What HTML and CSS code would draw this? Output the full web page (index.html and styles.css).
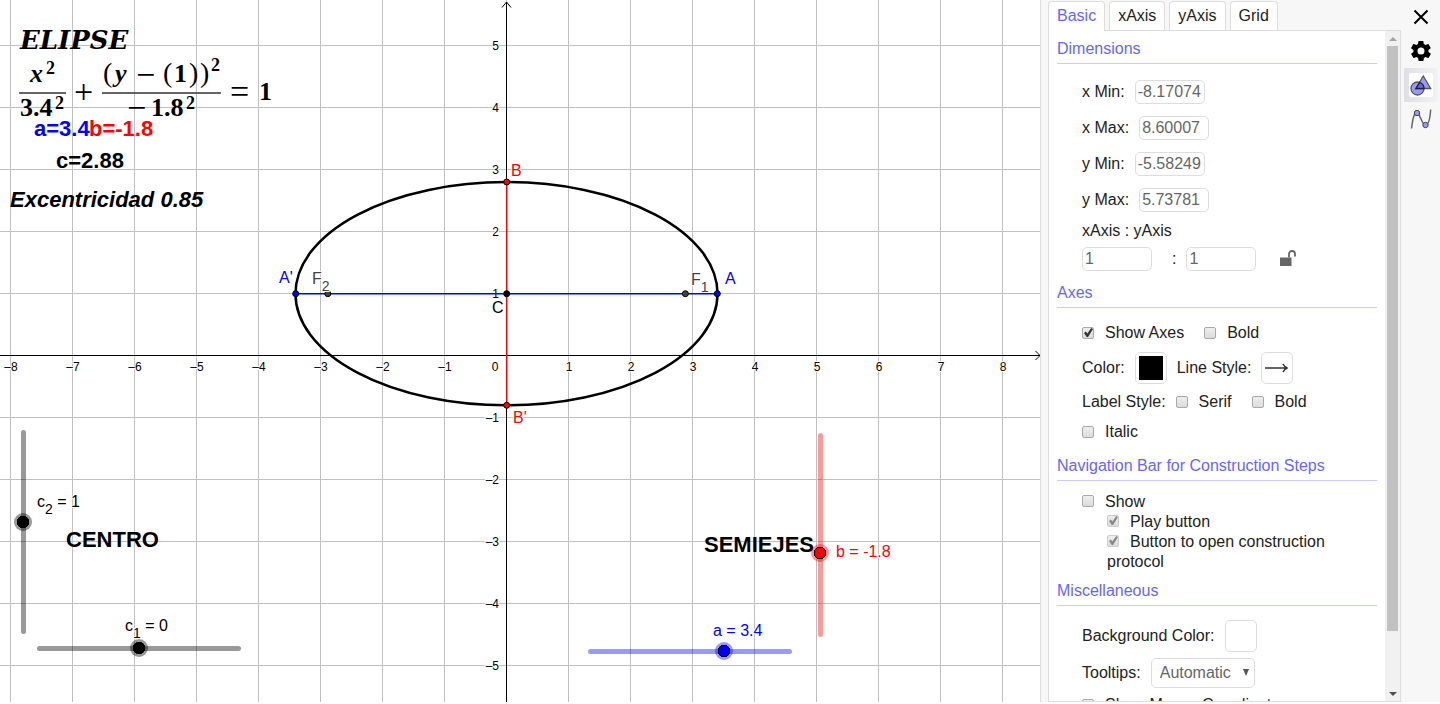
FILE: index.html
```html
<!DOCTYPE html>
<html lang="en">
<head>
<meta charset="utf-8">
<title>Elipse</title>
<link rel="stylesheet" href="styles.css">
</head>
<body>
<div class="app">
  <main class="canvas">
    <svg class="plot" role="img" aria-label="Elipse">
      <defs>
        <pattern id="grid" x="10" y="45" width="62" height="62" patternUnits="userSpaceOnUse">
          <path class="grid-line" d="M0.5 0V62M0 0.5H62"/>
        </pattern>
      </defs>
      <rect width="100%" height="100%" fill="url(#grid)"/>
      <g class="axis">
        <path d="M506.5 2V704M502 7.500L506.500 2L511 7.500"/>
        <path d="M0 355.500H1040M1035.500 351L1040 355.500L1035.500 360"/>
      </g>
      <g class="ticks ticks-x">
        <text x="11" y="371">–8</text><text x="73" y="371">–7</text><text x="135" y="371">–6</text><text x="197" y="371">–5</text><text x="259" y="371">–4</text><text x="321" y="371">–3</text><text x="383" y="371">–2</text><text x="445" y="371">–1</text><text x="495" y="371">0</text><text x="569" y="371">1</text><text x="631" y="371">2</text><text x="693" y="371">3</text><text x="755" y="371">4</text><text x="817" y="371">5</text><text x="879" y="371">6</text><text x="941" y="371">7</text><text x="1003" y="371">8</text>
      </g>
      <g class="ticks ticks-y">
        <text x="499" y="50">5</text><text x="499" y="112">4</text><text x="499" y="174">3</text><text x="499" y="236">2</text><text x="499" y="298">1</text><text x="499" y="422">–1</text><text x="499" y="484">–2</text><text x="499" y="546">–3</text><text x="499" y="608">–4</text><text x="499" y="670">–5</text>
      </g>
      <ellipse class="curve" cx="506.500" cy="293.700" rx="211" ry="111.600"/>
      <path class="axis-major" d="M296 293.700H717"/>
      <path class="axis-minor" d="M506.700 182V405"/>
      <g class="points">
        <circle class="focus" cx="327.800" cy="293.700" r="3"/>
        <circle class="focus" cx="685.400" cy="293.700" r="3"/>
        <circle class="blue" cx="295.700" cy="293.700" r="3"/>
        <circle class="blue" cx="717.300" cy="293.700" r="3"/>
        <circle class="red" cx="506.700" cy="182" r="3"/>
        <circle class="red" cx="506.700" cy="405.300" r="3"/>
        <circle cx="506.700" cy="293.700" r="3"/>
      </g>
      <g class="labels">
        <text class="blue" x="279" y="283">A'</text>
        <text class="blue" x="725" y="284">A</text>
        <text class="red" x="511" y="176">B</text>
        <text class="red" x="513" y="423">B'</text>
        <text x="492" y="313">C</text>
        <text class="focus" x="312" y="284">F<tspan class="sub" dy="7">2</tspan></text>
        <text class="focus" x="691" y="285">F<tspan class="sub" dy="7">1</tspan></text>
        <text x="37" y="507">c<tspan class="sub" dy="7">2</tspan><tspan dy="-7"> = 1</tspan></text>
        <text x="125" y="631">c<tspan class="sub" dy="7">1</tspan><tspan dy="-7"> = 0</tspan></text>
        <text class="blue" x="713" y="636">a = 3.4</text>
        <text class="red" x="836" y="557">b = -1.8</text>
      </g>
      <g class="notes">
        <text class="blue" x="34" y="136">a=3.4</text>
        <text class="red" x="89" y="136">b=-1.8</text>
        <text x="56" y="168">c=2.88</text>
        <text class="italic" x="10" y="207">Excentricidad 0.85</text>
        <text x="66" y="547">CENTRO</text>
        <text x="704" y="552">SEMIEJES</text>
      </g>
      <g class="formula">
        <text class="title" x="20" y="49">ELIPSE</text>
        <text class="italic" x="30" y="82">x</text><text class="sup" x="46" y="74">2</text>
        <text x="20" y="116">3.4</text><text class="sup" x="55" y="109">2</text>
        <text class="op" x="74" y="103">+</text>
        <text class="paren" x="103" y="82">(</text><text class="italic" x="115" y="82">y</text><text class="op" x="136" y="86">−</text><text class="paren" x="163" y="82">(</text><text x="174" y="82">1</text><text class="paren" x="189" y="82">)</text><text class="paren" x="200" y="82">)</text><text class="sup" x="211" y="71">2</text>
        <text class="op" x="127" y="119">−</text><text x="151" y="116">1.8</text><text class="sup" x="186" y="109">2</text>
        <text class="op" x="230" y="103">=</text><text x="259" y="100">1</text>
        <path d="M19 93H66M102 93H221"/>
      </g>
    </svg>
    <div class="slider vertical slider-c2"><input type="range" min="-10" max="10" step="0.1" value="1" aria-label="c2"></div>
    <div class="slider slider-c1"><input type="range" min="-10" max="10" step="0.1" value="0" aria-label="c1"></div>
    <div class="slider slider-a"><input type="range" min="-10" max="10" step="0.1" value="3.4" aria-label="a"></div>
    <div class="slider vertical slider-b"><input type="range" min="-10" max="10" step="0.1" value="-1.8" aria-label="b"></div>
  </main>

  <aside class="settings">
    <nav class="tabs">
      <button class="tab active" type="button">Basic</button>
      <button class="tab" type="button">xAxis</button>
      <button class="tab" type="button">yAxis</button>
      <button class="tab" type="button">Grid</button>
    </nav>
    <div class="panel">
      <form class="content">
        <h2>Dimensions</h2>
        <div class="rows">
          <div class="row tall"><label for="xmin">x Min:</label><input class="field" id="xmin" type="text" value="-8.17074"></div>
          <div class="row tall"><label for="xmax">x Max:</label><input class="field" id="xmax" type="text" value="8.60007"></div>
          <div class="row tall"><label for="ymin">y Min:</label><input class="field" id="ymin" type="text" value="-5.58249"></div>
          <div class="row tall"><label for="ymax">y Max:</label><input class="field" id="ymax" type="text" value="5.73781"></div>
          <div class="row short">xAxis : yAxis</div>
          <div class="row ratio">
            <input class="field" type="text" value="1" aria-label="xAxis ratio"><span class="colon">:</span><input class="field" type="text" value="1" aria-label="yAxis ratio">
            <button class="lock" type="button" aria-label="Lock ratio"><svg width="16" height="16" viewBox="0 0 16 16"><path d="M0 7.500H11.500V16H0z" fill="#666"/><path d="M9 7.500V4a3 3 0 0 1 6 0V6.500" fill="none" stroke="#666" stroke-width="1.800"/></svg></button>
          </div>
        </div>

        <h2>Axes</h2>
        <div class="rows">
          <div class="row wide">
            <label class="check"><input type="checkbox" checked>Show Axes</label>
            <label class="check"><input type="checkbox">Bold</label>
          </div>
          <div class="row swatches">
            <span>Color:</span><button class="picker" type="button" aria-label="Color"><span class="swatch"></span></button>
            <span>Line Style:</span><button class="picker" type="button" aria-label="Line Style"><svg width="24" height="12" viewBox="0 0 24 12"><path d="M0 6H22.500M18 2C19 4 20.500 5.500 22.500 6C20.500 6.500 19 8 18 10" fill="none" stroke="#333" stroke-width="1.500"/></svg></button>
          </div>
          <div class="row">
            <span>Label Style:</span>
            <div class="wide"><label class="check"><input type="checkbox">Serif</label><label class="check"><input type="checkbox">Bold</label></div>
          </div>
          <div class="row"><label class="check"><input type="checkbox">Italic</label></div>
        </div>

        <h2>Navigation Bar for Construction Steps</h2>
        <div class="rows options">
          <label class="option"><input type="checkbox">Show</label>
          <label class="option nested"><input type="checkbox" checked disabled>Play button</label>
          <label class="option nested"><input type="checkbox" checked disabled>Button to open construction protocol</label>
        </div>

        <h2>Miscellaneous</h2>
        <div class="rows">
          <div class="row background"><span>Background Color:</span><button class="picker" type="button" aria-label="Background Color"></button></div>
          <div class="row tooltips"><label for="tooltips">Tooltips:</label><span class="select"><select id="tooltips"><option>Automatic</option></select></span></div>
          <div class="row"><label class="check"><input type="checkbox">Show Mouse Coordinates</label></div>
        </div>
      </form>
      <div class="scrollbar"><span class="arrow up"></span><span class="thumb"></span><span class="rest"></span><span class="arrow down"></span></div>
    </div>
  </aside>

  <nav class="rail">
    <button type="button" aria-label="Close"><svg width="24" height="24" viewBox="0 0 24 24"><path d="M5.500 5.500L18.500 18.500M18.500 5.500L5.500 18.500" stroke="#000" stroke-width="2"/></svg></button>
    <button type="button" aria-label="Settings"><svg width="24" height="24" viewBox="0 0 24 24"><path fill="#000" fill-rule="evenodd" d="M19.400 13c0-.3.100-.6.100-1s0-.7-.1-1l2.100-1.600c.2-.2.200-.4.100-.6l-2-3.500c-.1-.2-.4-.3-.6-.2l-2.500 1c-.5-.4-1.100-.7-1.700-1l-.4-2.600c0-.2-.2-.4-.5-.4h-4c-.3 0-.5.200-.5.400l-.4 2.600c-.6.300-1.200.600-1.700 1l-2.500-1c-.2-.1-.5 0-.6.200l-2 3.500c-.1.200-.1.500.1.600L4.500 11c0 .3-.1.700-.1 1s0 .7.100 1l-2.100 1.600c-.2.200-.2.400-.1.600l2 3.500c.1.200.4.300.6.200l2.500-1c.5.400 1.100.7 1.700 1l.4 2.600c0 .2.200.4.500.4h4c.3 0 .5-.2.500-.4l.4-2.600c.6-.3 1.200-.6 1.700-1l2.500 1c.2.100.5 0 .6-.2l2-3.500c.1-.2.100-.5-.1-.6zM12 15.500a3.500 3.500 0 1 1 0-7 3.500 3.500 0 0 1 0 7z"/></svg></button>
    <button class="selected" type="button" aria-label="Graphics"><svg width="24" height="24" viewBox="0 0 24 24"><rect width="24" height="24" rx="2" fill="#fff"/><g stroke="#555" stroke-width="1.300"><circle cx="8.500" cy="15.500" r="6.500" fill="#99f"/><path d="M14.300 3L21.700 15.500H6.800z" fill="#99f"/></g><path d="M10.800 9.500a6.500 6.500 0 0 1 4.200 6H7z" fill="#66f" stroke="#222" stroke-width="1.300"/></svg></button>
    <button type="button" aria-label="Graphics 2"><svg width="24" height="24" viewBox="0 0 24 24"><path d="M2.500 21.500C4 10 5.500 5 8 5.500C11 6.500 13 18 16.500 18C19 18 21 12 21.700 2.500" fill="none" stroke="#666" stroke-width="1.500"/><g fill="#99f" stroke="#445" stroke-width="1"><circle cx="8" cy="6" r="2.700"/><circle cx="16.500" cy="18" r="2.700"/></g></svg></button>
  </nav>
</div>
</body>
</html>
```

FILE: styles.css
```css
* { box-sizing: border-box; }
body {
  margin: 0;
  font: 16px/20px "Liberation Sans", Arial, sans-serif;
  color: #222;
  background: #fff;
}
button, input, select { font: inherit; color: inherit; margin: 0; }
button { padding: 0; border: 0; background: none; }
.app {
  display: flex;
  height: 100vh;
  padding-bottom: 2px;
  overflow: hidden;
}

/* Drawing pad */
.canvas { position: relative; flex: 1; min-width: 0; overflow: hidden; }
.plot { display: block; width: 100%; height: 100%; }
.grid-line { fill: none; stroke: #c0c0c0; }
.axis path { fill: none; stroke: #000; }
.ticks text, .labels text {
  stroke: #fff;
  stroke-width: 2px;
  paint-order: stroke;
  stroke-linejoin: round;
}
.ticks { font-size: 12px; fill: #000; }
.ticks-x { text-anchor: middle; }
.ticks-y { text-anchor: end; }
.curve { fill: none; stroke: #000; stroke-width: 2.5px; }
.axis-major { stroke: #00f; stroke-width: 1.5px; }
.axis-minor { stroke: #f00; stroke-width: 1.5px; }
.points circle { stroke: #000; stroke-width: 1px; }
.plot .blue { fill: #00f; }
.plot .red { fill: #f00; }
.plot .focus { fill: #444; }
.labels { font-size: 16px; fill: #000; }
.labels .sub { font-size: 14px; }
.notes { font-size: 22px; font-weight: bold; fill: #000; }
.italic { font-style: italic; }
.formula { font: bold 26px "Liberation Serif", serif; fill: #000; }
.formula .title { font: italic bold 26px "DejaVu Serif", serif; }
.formula .sup { font-size: 18px; }
.formula .op { font-size: 34px; font-weight: normal; }
.formula .paren { font-size: 28px; font-weight: normal; }
.formula path { stroke: #333; stroke-width: 1.5px; }

.slider { position: absolute; width: 218px; height: 18px; }
.slider::before {
  content: "";
  position: absolute;
  inset: 7px 7px 6px;
  border-radius: 3px;
  background: currentColor;
  opacity: 0.4;
}
.slider.vertical { width: 18px; height: 218px; }
.slider.vertical::before { inset: 7px 6px 7px 7px; }
.slider input {
  position: relative;
  display: block;
  width: 100%;
  height: 100%;
  appearance: none;
  background: none;
}
.slider.vertical input { writing-mode: vertical-lr; direction: rtl; }
.slider input::-webkit-slider-thumb {
  appearance: none;
  width: 18px;
  height: 18px;
  border-radius: 50%;
  background: radial-gradient(circle, currentColor 5px, #000 5.5px, #000 6px, transparent 6.5px),
    color-mix(in srgb, currentColor 40%, transparent);
}
.slider-c2 { left: 14px; top: 423px; color: #000; }
.slider-c1 { left: 30px; top: 639px; color: #000; }
.slider-a { left: 581px; top: 642px; color: #00f; }
.slider-b { left: 811px; top: 426px; color: #f00; }

/* Settings */
.settings {
  display: flex;
  flex-direction: column;
  width: 361px;
  padding-left: 7px;
  border-left: 1px solid #ddd;
  background: #f7f7f7;
}
.tabs { display: flex; gap: 4px; padding-top: 1px; }
.tab {
  height: 29px;
  padding: 0 8px;
  border: 1px solid #ddd;
  border-bottom: 0;
  border-radius: 4px 4px 0 0;
  background: #fff;
}
.tab.active { color: #66f; height: 30px; margin-bottom: -1px; position: relative; padding-bottom: 1px; }
.panel {
  display: flex;
  flex: 1;
  min-height: 0;
  border: 1px solid #ddd;
  background: #fff;
}
.content { flex: 1; min-width: 0; padding: 8px 8px 0; overflow: hidden; }
h2 {
  margin: 0 0 10px;
  padding-bottom: 4px;
  border-bottom: 1px solid #ccf;
  font-size: 16px;
  font-weight: normal;
  color: #66f;
}
.rows { padding-left: 25px; margin-bottom: 9px; }
.options { padding-top: 1px; }
.row { display: flex; align-items: center; gap: 10px; height: 30px; }
.row.tall { height: 36px; }
.row.short { height: 26px; }
.row.swatches { height: 39px; }
.row.background { height: 40px; }
.row.tooltips { height: 34px; }
.row.ratio { gap: 0; }
.wide { display: flex; gap: 20px; }
.row.wide { gap: 20px; }
.field {
  width: 70px;
  height: 24px;
  padding: 0 2px;
  border: 1px solid #ddd;
  border-radius: 5px;
  background: #fff;
  color: #666;
}
.colon { padding: 0 10px 0 20px; }
.lock { display: flex; margin-left: 24px; padding-bottom: 3px; }
.check { display: flex; align-items: center; gap: 11px; }
.option { display: block; }
.option input { margin-right: 11px; }
.nested { padding-left: 25px; }
input[type="checkbox"] {
  position: relative;
  appearance: none;
  width: 12px;
  height: 12px;
  border: 1px solid #aaa;
  border-radius: 2px;
  background: linear-gradient(#eee, #dcdcdc);
}
input[type="checkbox"]:checked::before {
  content: "";
  position: absolute;
  inset: 0 0 1px 1px;
  background: #333;
  clip-path: polygon(0 55%, 20% 40%, 38% 62%, 80% 0, 100% 12%, 45% 100%, 30% 100%);
}
input[type="checkbox"]:disabled { border-color: #ccc; }
input[type="checkbox"]:disabled::before { background: #888; }
.picker {
  display: flex;
  align-items: center;
  justify-content: center;
  width: 32px;
  height: 32px;
  border: 1px solid #ddd;
  border-radius: 5px;
  background: #fff;
}
.swatch { width: 24px; height: 24px; background: #000; }
.select { position: relative; }
.select::after {
  content: "";
  position: absolute;
  right: 6px;
  top: 11px;
  border: 3px solid transparent;
  border-top: 7px solid #555;
  border-bottom: 0;
}
select {
  display: block;
  appearance: none;
  width: 104px;
  height: 30px;
  padding: 0 8px;
  border: 1px solid #ddd;
  border-radius: 5px;
  background: #fff;
  color: #666;
}
.scrollbar { display: flex; flex-direction: column; align-items: center; width: 15px; background: #f1f1f1; }
.arrow { display: flex; align-items: center; height: 15px; }
.arrow::before { content: ""; border: 4px solid transparent; }
.up::before { border-bottom-color: #a3a3a3; border-top: 0; }
.down::before { border-top-color: #505050; border-bottom: 0; }
.thumb { flex: 584; width: 11px; background: #c1c1c1; }
.rest { flex: 55; }

/* View switcher */
.rail {
  display: flex;
  flex-direction: column;
  align-items: center;
  width: 39px;
  padding-left: 1px;
  background: #f7f7f7;
}
.rail button { display: flex; align-items: center; justify-content: center; width: 34px; height: 34px; }
.rail .selected { background: linear-gradient(to right, #dfdfe3, #f3f3f5); }
```
